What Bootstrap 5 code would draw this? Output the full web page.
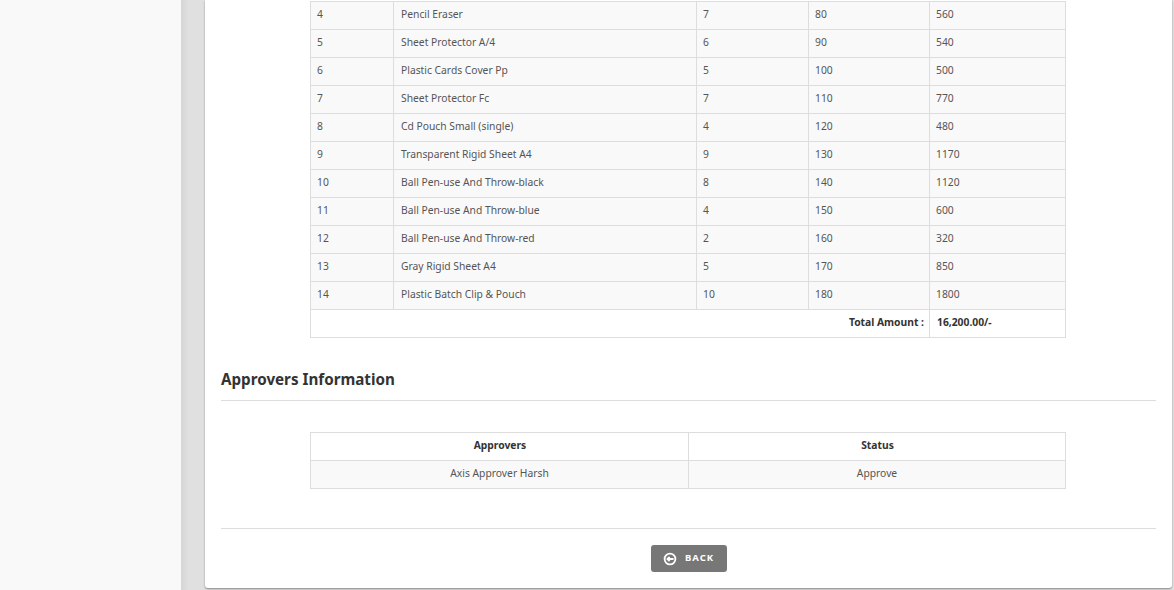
<!DOCTYPE html>
<html lang="en">
<head>
<meta charset="utf-8">
<title>Order</title>
<link href="https://cdn.jsdelivr.net/npm/bootstrap@5.3.0/dist/css/bootstrap.min.css" rel="stylesheet">
<style>
html,body{height:590px;overflow:hidden;background:#e0e0e0;}
body{font-family:"Noto Sans","Open Sans",sans-serif;font-size:10.3px;color:#555;}
.shell{height:590px;overflow:hidden;}
.side{width:181px;background:#f9f9f9;flex:none;}
.gutter{padding:0 2px 2px 24px;flex:1 1 auto;min-width:0;background:linear-gradient(90deg,#d6d6d6 0,#e0e0e0 8px) #e0e0e0;}
.sheet{height:588px;background:#fff;border-radius:0 0 3px 3px;box-shadow:0 1px 2px rgba(0,0,0,.4);padding:1px 16px 0;}
.tw{width:755px;margin-left:89px;}
table.dt{width:755px;table-layout:fixed;border-collapse:collapse;margin:0;}
table.dt td,table.dt th{border:1px solid #ddd;height:28px;padding:0 5px 2px 6px;vertical-align:middle;line-height:1;font-weight:400;color:#555;}
table.dt tr.st td{background:#f9f9f9;}
table.dt td:nth-child(2),table.dt td.val{padding-left:7px;}
table.dt td.lab,table.dt td.val{font-weight:700;color:#333;}
table.dt th{font-weight:700;color:#333;text-align:center;}
.tb2 td{padding-left:5px!important;}
.c1{width:83px}.c2{width:303px}.c3{width:112px}.c4{width:121px}.c5{width:136px}
.h1c{width:378px}.h2c{width:377px}
.sect{font-size:15.2px;font-weight:700;color:#333;line-height:20px;margin:31px 0 11px;}
.rule{border-top:1px solid #ddd;height:0;}
.tb2{margin-top:31px;margin-bottom:39px;}
.backb{background:#777;color:#fff;border:0;border-radius:3px;width:76px;height:27px;font-size:9.5px;font-weight:700;letter-spacing:1px;padding:0;margin-top:16px;}
.backb:hover{background:#777;color:#fff;}
</style>
</head>
<body>
<div class="shell d-flex">
  <div class="side"></div>
  <div class="gutter">
    <div class="sheet">
      <div class="tw">
        <table class="dt">
          <colgroup><col class="c1"><col class="c2"><col class="c3"><col class="c4"><col class="c5"></colgroup>
          <tbody>
            <tr class="st"><td>4</td><td>Pencil Eraser</td><td>7</td><td>80</td><td>560</td></tr>
            <tr class="st"><td>5</td><td>Sheet Protector A/4</td><td>6</td><td>90</td><td>540</td></tr>
            <tr class="st"><td>6</td><td>Plastic Cards Cover Pp</td><td>5</td><td>100</td><td>500</td></tr>
            <tr class="st"><td>7</td><td>Sheet Protector Fc</td><td>7</td><td>110</td><td>770</td></tr>
            <tr class="st"><td>8</td><td>Cd Pouch Small (single)</td><td>4</td><td>120</td><td>480</td></tr>
            <tr class="st"><td>9</td><td>Transparent Rigid Sheet A4</td><td>9</td><td>130</td><td>1170</td></tr>
            <tr class="st"><td>10</td><td>Ball Pen-use And Throw-black</td><td>8</td><td>140</td><td>1120</td></tr>
            <tr class="st"><td>11</td><td>Ball Pen-use And Throw-blue</td><td>4</td><td>150</td><td>600</td></tr>
            <tr class="st"><td>12</td><td>Ball Pen-use And Throw-red</td><td>2</td><td>160</td><td>320</td></tr>
            <tr class="st"><td>13</td><td>Gray Rigid Sheet A4</td><td>5</td><td>170</td><td>850</td></tr>
            <tr class="st"><td>14</td><td>Plastic Batch Clip &amp; Pouch</td><td>10</td><td>180</td><td>1800</td></tr>
            <tr><td colspan="4" class="lab text-end">Total Amount :</td><td class="val">16,200.00/-</td></tr>
          </tbody>
        </table>
      </div>
      <h2 class="sect">Approvers Information</h2>
      <div class="rule"></div>
      <div class="tw tb2">
        <table class="dt">
          <colgroup><col class="h1c"><col class="h2c"></colgroup>
          <thead><tr><th>Approvers</th><th>Status</th></tr></thead>
          <tbody><tr class="st"><td class="text-center">Axis Approver Harsh</td><td class="text-center">Approve</td></tr></tbody>
        </table>
      </div>
      <div class="rule"></div>
      <div class="text-center">
        <button type="button" class="btn backb d-inline-flex align-items-center justify-content-center gap-1">
          <svg width="14" height="14" viewBox="0 0 14 14" fill="none" stroke="#fff" stroke-width="1.8"><circle cx="7" cy="7" r="5.4"/><path d="M10.5 7H4.5M6.6 4.9L4.4 7l2.2 2.1"/></svg>
          <span class="ms-1">BACK</span>
        </button>
      </div>
    </div>
  </div>
</div>
<script src="https://cdn.jsdelivr.net/npm/bootstrap@5.3.0/dist/js/bootstrap.bundle.min.js"></script>
</body>
</html>
